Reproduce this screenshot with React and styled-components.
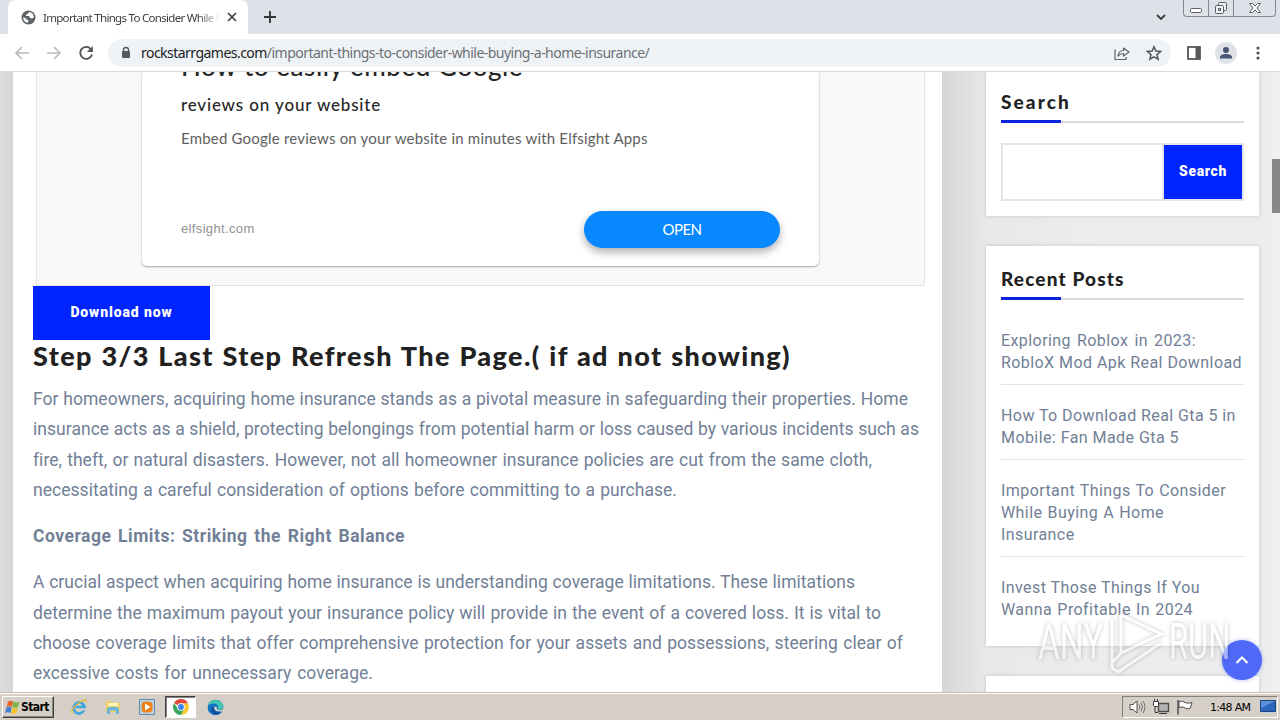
import React from 'react';
import styled, { createGlobalStyle } from 'styled-components';

const GlobalStyle = createGlobalStyle`
  * { box-sizing: border-box; }
  body { margin: 0; overflow: hidden; background: #ededed; }
`;

const Screen = styled.div`
  width: 1280px;
  height: 720px;
  display: flex;
  flex-direction: column;
  overflow: hidden;
  font-family: Roboto, 'Liberation Sans', sans-serif;
`;

const TabStrip = styled.div`
  position: relative;
  height: 34px;
  flex: none;
  display: flex;
  padding-left: 8px;
  background: #dee1e8;
`;

const Tab = styled.div`
  width: 240px;
  height: 34px;
  display: flex;
  align-items: center;
  padding: 0 10px 0 13px;
  background: #fff;
  border-radius: 7px 7px 0 0;
`;

const TabTitle = styled.div`
  width: 175px;
  margin: 0 8px 0 7px;
  overflow: hidden;
  white-space: nowrap;
  font: 11.5px 'Noto Sans', sans-serif;
  letter-spacing: -0.7px;
  color: #3c4043;
  mask-image: linear-gradient(90deg, #000 155px, transparent 177px);
`;

const NewTab = styled.div`
  display: flex;
  align-items: center;
  padding-left: 15px;
`;

const WindowControls = styled.div`
  position: absolute;
  right: 4px;
  top: 0;
  display: flex;
  height: 17px;
  border: 1px solid #85898f;
  border-top: 0;
  border-radius: 0 0 4px 4px;
`;

const Control = styled.div`
  width: ${(p) => p.$w}px;
  display: flex;
  justify-content: center;
  border-left: ${(p) => (p.$first ? 0 : 1)}px solid #85898f;
`;

const TabSearch = styled.div`
  margin-left: auto;
  margin-right: 114px;
  padding-top: 12px;
  line-height: 0;
`;

const Toolbar = styled.div`
  height: 38px;
  flex: none;
  display: flex;
  align-items: center;
  padding: 0 20px 0 13px;
  background: #fff;
  border-bottom: 1px solid #d8dadd;
`;

const Nav = styled.div`
  display: flex;
  gap: 14px;
  width: 95px;
`;

const AddressBar = styled.div`
  width: 1063px;
  flex: none;
  height: 28px;
  display: flex;
  align-items: center;
  padding: 0 9px 0 12px;
  border-radius: 14px;
  background: #f0f3f6;
`;

const Url = styled.div`
  flex: 1;
  margin-left: 9px;
  white-space: nowrap;
  font: 14px/18px 'Noto Sans', sans-serif;
  letter-spacing: -0.53px;
  color: #6b7075;

  b {
    font-weight: 400;
    color: #202124;
  }
`;

const AddressIcons = styled.div`
  display: flex;
  gap: 16px;
`;

const ToolbarIcons = styled.div`
  display: flex;
  align-items: center;
  flex: 1;
  justify-content: space-between;
  padding-left: 16px;
`;

const Profile = styled.div`
  width: 22px;
  height: 22px;
  margin-right: 6px;
  border-radius: 50%;
  background: #dfe3e8;
  display: flex;
  align-items: center;
  justify-content: center;
`;

const Viewport = styled.div`
  position: relative;
  height: 620px;
  flex: none;
  display: flex;
  overflow: hidden;
  background: linear-gradient(90deg, #dcdcdc 0, #d6d6d6 13px, #d6d6d6 942px, #e8e8e8 986px, #ededed 1100px);
`;

const Article = styled.main`
  width: 929px;
  height: 620px;
  flex: none;
  margin-left: 13px;
  padding: 0 17px 0 20px;
  background: #fff;
`;

const AdFrame = styled.div`
  height: 214px;
  margin-left: 3px;
  padding-left: 105px;
  background: #f8f8f8;
  border: 1px solid #e2e2e2;
  border-top: 0;
`;

const Ad = styled.div`
  width: 677px;
  height: 194px;
  padding: 0 39px;
  overflow: hidden;
  background: #fff;
  border-radius: 0 0 5px 5px;
  box-shadow: 0 1px 2px rgba(0, 0, 0, 0.35);
  color: #262626;
  white-space: nowrap;
`;

const AdTitle = styled.div`
  width: 342px;
  height: 28px;
  margin-top: -21px;
  font: 500 26px/30px Lato, sans-serif;
  letter-spacing: 0.5px;
  text-align-last: justify;
`;

const AdSubtitle = styled.div`
  width: 200px;
  margin-top: 14px;
  font: 500 17px/24px Lato, sans-serif;
  letter-spacing: 0.8px;
  text-align-last: justify;
`;

const AdText = styled.div`
  width: 466px;
  margin-top: 11px;
  font: 15px/21px Lato, sans-serif;
  letter-spacing: 0.2px;
  text-align-last: justify;
  color: #5e5e5e;
`;

const AdFooter = styled.div`
  display: flex;
  align-items: center;
  justify-content: space-between;
  margin-top: 62px;
  font: 13px/20px 'Liberation Sans', sans-serif;
  letter-spacing: 0.35px;
  color: #929292;
`;

const AdDomain = styled.span`
  padding-bottom: 2px;
`;

const OpenButton = styled.div`
  width: 196px;
  height: 37px;
  border-radius: 19px;
  background: #0788ff;
  box-shadow: 0 4px 9px rgba(0, 0, 0, 0.32);
  color: #fff;
  font: 15px/36px Lato, sans-serif;
  letter-spacing: -0.5px;
  text-align: center;
`;

const DownloadButton = styled.div`
  width: 177px;
  height: 54px;
  background: #0024ff;
  color: #fff;
  text-align: center;
  font: 900 14px/53px Roboto, sans-serif;
  letter-spacing: 0.9px;
`;

const Line = styled.span`
  display: block;
  width: ${(p) => p.$w}px;
  white-space: nowrap;
  text-align-last: justify;
`;

const Heading = styled.h2`
  margin: 0;
  height: 36px;
  font: 900 27px/32px Lato, sans-serif;
  letter-spacing: 1.4px;
  color: #212121;
`;

const Paragraph = styled.p`
  margin: 0 0 16px;
  padding-top: ${(p) => p.$top || 0}px;
  font: ${(p) => (p.$bold ? 700 : 400)} 17.5px/30.3px Roboto, sans-serif;
  letter-spacing: ${(p) => (p.$bold ? 0.5 : 0.04)}px;
  color: #718096;
`;

const Sidebar = styled.aside`
  width: 273px;
  margin-left: 44px;
  display: flex;
  flex-direction: column;
  gap: 30px;
`;

const Widget = styled.section`
  height: ${(p) => p.$h}px;
  flex: none;
  padding: ${(p) => p.$top}px 15px 0;
  background: #fff;
  box-shadow: 0 0 4px rgba(0, 0, 0, 0.16);
`;

const WidgetTitle = styled.h3`
  margin: 0;
  height: 34px;
  font: 900 19px/26px Lato, sans-serif;
  letter-spacing: ${(p) => p.$spacing}px;
  color: #212121;
  border-bottom: 2px solid #d9d9d9;
  position: relative;
  white-space: nowrap;

  &::after {
    content: '';
    position: absolute;
    left: 0;
    bottom: -2px;
    width: 60px;
    height: 3px;
    background: #0c25dc;
  }
`;

const SearchForm = styled.div`
  display: flex;
  height: 58px;
  margin-top: 20px;
  border: 2px solid #e3e5ea;
`;

const SearchInput = styled.div`
  flex: 1;
  border-right: 2px solid #e3e5ea;
`;

const SearchButton = styled.div`
  width: 78px;
  background: #0024ff;
  color: #fff;
  text-align: center;
  font: 900 14px/52px Roboto, sans-serif;
  letter-spacing: 0.6px;
`;

const Post = styled.div`
  padding: ${(p) => p.$top || 20}px 0 10px;
  border-bottom: ${(p) => (p.$last ? 0 : 1)}px solid #e2e2e2;
  font: 16px/22px Roboto, sans-serif;
  letter-spacing: 0.42px;
  color: #718096;
`;

const ScrollThumb = styled.div`
  position: absolute;
  right: 0;
  top: 87px;
  width: 8px;
  height: 54px;
  background: #878787;
`;

const ScrollTrack = styled.div`
  position: absolute;
  right: 0;
  top: 0;
  width: 8px;
  height: 620px;
  background: #f0f0f0;
`;

const ToTop = styled.div`
  position: absolute;
  left: 1222px;
  top: 568px;
  width: 40px;
  height: 40px;
  border-radius: 50%;
  background: #5069f8;
  box-shadow: 0 0 4px rgba(60, 80, 220, 0.4);
  display: flex;
  align-items: center;
  justify-content: center;
`;

const Watermark = styled.div`
  position: absolute;
  left: 1038px;
  top: 536px;
  width: 200px;
  height: 68px;
  display: flex;
  align-items: center;
  filter: drop-shadow(0 0 2px rgba(0, 0, 0, 0.5));
  opacity: 0.5;
`;

const MarkText = styled.span`
  flex: none;
  width: ${(p) => p.$w}px;
  font: 400 50px/68px Roboto, sans-serif;
  color: #fff;

  span {
    display: inline-block;
    transform: scaleX(${(p) => p.$scale});
    transform-origin: left;
  }
`;

const Taskbar = styled.div`
  height: 28px;
  flex: none;
  display: flex;
  align-items: center;
  padding: 1px 2px 0;
  background: #d5cfc7;
  border-top: 1px solid #c4c0b8;
  box-shadow: inset 0 1px #fff;
`;

const Start = styled.div`
  width: 52px;
  height: 22px;
  display: flex;
  align-items: center;
  gap: 1px;
  padding-left: 2px;
  border: 1px solid;
  border-color: #fff #404040 #404040 #fff;
  box-shadow: inset -1px -1px #8a867e;
  font: 700 12px 'DejaVu Sans Condensed', 'DejaVu Sans', sans-serif;
  letter-spacing: -0.6px;
  color: #000;
`;

const TaskItem = styled.div`
  width: ${(p) => (p.$active ? 31 : 20)}px;
  height: 22px;
  margin-left: ${(p) => p.$gap}px;
  display: flex;
  align-items: center;
  justify-content: center;
  ${(p) => p.$active && 'background: #fff; border: 1px solid; border-color: #404040 #fff #fff #404040; box-shadow: inset 1px 1px #85817a;'}
`;

const Tray = styled.div`
  margin-left: auto;
  width: 156px;
  height: 22px;
  display: flex;
  align-items: center;
  padding-left: 5px;
  border: 1px solid;
  border-color: #85817a #fff #fff #85817a;
`;

const Clock = styled.div`
  margin: 0 9px 0 16px;
  width: 41px;
  white-space: nowrap;
  font: 11px 'DejaVu Sans', sans-serif;
  letter-spacing: -0.7px;
  color: #000;
`;

const GlobeIcon = () => (
  <svg width="15" height="15" viewBox="0 0 15 15">
    <circle cx="7.5" cy="7.5" r="7" fill="#5f6368" />
    <path d="M2 7.5 4.5 8l1.2 1.7 1.7.3-.3 2.8C4.4 12.7 2.3 10.7 2 7.5ZM8 2c-.2 1-1 1.2-1 2l-2 .5V6h3l1.3 2.3H12l.9-1.3C12.7 4.3 10.6 2.2 8 2Z" fill="#fff" />
  </svg>
);

const ArrowIcon = ({ flip }) => (
  <svg width="18" height="18" viewBox="0 0 18 18" fill="none" stroke="#b9bbbe" strokeWidth="1.7">
    <path d={flip ? 'M2 9h13M9 3l6 6-6 6' : 'M16 9H3M9 3 3 9l6 6'} />
  </svg>
);

const ReloadIcon = () => (
  <svg width="18" height="18" viewBox="0 0 18 18" fill="none" stroke="#505357" strokeWidth="1.9">
    <path d="M13.8 5A6 6 0 1 0 15 10.5" />
    <path d="M15.9 2v6h-6z" fill="#505357" stroke="none" />
  </svg>
);

const LockIcon = () => (
  <svg width="12" height="14" viewBox="0 0 12 14">
    <path d="M3.5 6V4a2.5 2.5 0 0 1 5 0v2" fill="none" stroke="#55595d" strokeWidth="1.4" />
    <rect x="2" y="5" width="8" height="7" rx="1" fill="#55595d" />
  </svg>
);

const ShareIcon = () => (
  <svg width="16" height="16" viewBox="0 0 16 16" fill="none" stroke="#5f6368" strokeWidth="1.2">
    <path d="M2 5H1v9.5h11V12" />
    <path d="M4 11c.4-3.5 2.2-5.5 5.5-5.5V3L15 7l-5.500 4V8.500C7 8.500 5.500 9.200 4 11Z" strokeLinejoin="round" />
  </svg>
);

const StarIcon = () => (
  <svg width="16" height="16" viewBox="0 0 16 16">
    <path d="m8 1.8 1.9 4.3 4.7.4-3.6 3.1 1.1 4.6L8 11.8l-4.1 2.4L5 9.6 1.4 6.5l4.7-.4Z" fill="none" stroke="#505357" strokeWidth="1.5" />
  </svg>
);

const PanelIcon = () => (
  <svg width="14" height="14" viewBox="0 0 14 14">
    <rect x="1" y="1" width="12" height="12" fill="#fff" stroke="#55575b" strokeWidth="1.8" />
    <path d="M8.500 1H13v12H8.500z" fill="#55575b" />
  </svg>
);

const PersonIcon = () => (
  <svg width="14" height="14" viewBox="0 0 14 14" fill="#4a5675">
    <circle cx="7" cy="4" r="3" />
    <path d="M1 12.500V11c0-2 3-3 6-3s6 1 6 3v1.500Z" />
  </svg>
);

const DotsIcon = () => (
  <svg width="4" height="16" viewBox="0 0 4 16" fill="#505357">
    <circle cx="2" cy="3" r="1.6" />
    <circle cx="2" cy="8" r="1.6" />
    <circle cx="2" cy="13" r="1.6" />
  </svg>
);

const FlagLogo = () => (
  <svg width="15" height="15" viewBox="0 0 15 15">
    <path d="M3 1.500c2-1 3.500-1 5.300 0L7 7c-2-1-3.500-1-5.400 0Z" fill="#e8642c" />
    <path d="M8.600 1.800c2 1 3.800 1 5.700 0L13 7.300c-2 1-3.500 1-5.600 0Z" fill="#7ab648" />
    <path d="M1.400 7.500c2-1 3.500-1 5.300 0l-1.300 5.400c-2-1-3.200-1-5.200 0Z" fill="#3f80cf" />
    <path d="M7.200 7.800c2 1 3.500 1 5.600 0l-1.400 5.400c-2 1-3.500 1-5.500 0Z" fill="#f6c431" />
  </svg>
);

const IeIcon = () => (
  <svg width="18" height="18" viewBox="0 0 18 18" fill="none">
    <path d="M14 12.5A5.5 5.5 0 1 1 14.5 9H5" stroke="#3fa6df" strokeWidth="2.7" />
    <path d="M3 15.5C-.5 15 3.500 9 8 5.500S17 0 16.300 4.500" stroke="#e9b93c" strokeWidth="1.3" />
  </svg>
);

const FolderIcon = () => (
  <svg width="18" height="18" viewBox="0 0 18 18">
    <path d="M2 3h5l1 1.500h8V14H2z" fill="#edcf69" />
    <path d="M4 5h10v3H4z" fill="#fff3b8" />
    <path d="M3 16v-4q0-3 3-3h6q3 0 3 3v4h-3v-3.500H6V16z" fill="#69b6dc" />
  </svg>
);

const MediaIcon = () => (
  <svg width="16" height="16" viewBox="0 0 16 16">
    <path d="M.5.5h15v15H.5z" fill="#b7d5ea" stroke="#6689a8" />
    <rect x="2.5" y="2.5" width="11" height="11" rx="3.5" fill="#f08218" />
    <path d="m6 4.500 5.500 3.500L6 11.500z" fill="#fff" />
  </svg>
);

const ChromeIcon = () => (
  <svg width="16" height="16" viewBox="0 0 18 18">
    <path d="M9 9 1.200 4.500A9 9 0 0 1 16.800 4.500L17 5H9Z" fill="#df4a3c" />
    <path d="M9 5h8a9 9 0 0 1-8 13l3.500-7Z" fill="#f7ca34" />
    <path d="M1.200 4.500A9 9 0 0 0 9 18l3.500-7L9 13l-3.500-2Z" fill="#3aa556" />
    <circle cx="9" cy="9" r="4.3" fill="#fff" />
    <circle cx="9" cy="9" r="3.3" fill="#4183ed" />
  </svg>
);

const EdgeIcon = () => (
  <svg width="17" height="17" viewBox="0 0 18 18">
    <circle cx="9" cy="9" r="8.3" fill="#1274c5" />
    <path d="M1 7C2-1 16-1 17.300 8c.2 3-3 4-6 3 2-4-2-7-5.500-6C3 5.500 1.500 6 1 7Z" fill="#41c5b0" />
    <path d="M7.500 8.500c-1.500 3 2 7 7 5.500-4 4-10 2-10-2.500 0-2 1.500-3 3-3Z" fill="#124b91" />
    <path d="M8 8.500c1-1.500 3 0 2.500 2.300 2 1.300 5 1 6.500-.3l1 3-6-.5c-3 0-5-2-4-4.500Z" fill="#d5cfc7" />
  </svg>
);

const TrayIcons = () => (
  <svg width="66" height="18" viewBox="0 0 66 18" fill="none" stroke="#4e4e4e">
    <path d="M2 6.500h3L9 3v12l-4-3.500H2z" fill="#fff" />
    <path d="M11 6.500q1.500 2.500 0 5M13 4.500q3 4.500 0 9M15 3q4 6 0 12" stroke="#77736d" />
    <path d="M30.500 5.500h10v8h-10z" fill="#b4b4b4" strokeWidth="1.4" />
    <path d="M31 15.500h8M27 9v5.500h3" stroke="#383838" />
    <path d="M25.500 3.500h5v4l-1 1h-3l-1-1zM26.500 1v3M29.500 1v3" fill="#fff" stroke="#383838" />
    <path d="M50 2v14.500" strokeWidth="1.5" />
    <path d="M51 3.500q4-1 6 1 3 1.500 7 0l-2 6q-3 1-5-.5-2-2-6-.5Z" fill="#fff" />
  </svg>
);

const DesktopIcon = () => (
  <svg width="16" height="14" viewBox="0 0 16 14">
    <path d="M.5.5h15v11H.5z" fill="#2c66bd" stroke="#1c447f" />
    <path d="M1 1h14L1 8z" fill="#5a92dc" />
    <path d="M3 12.500h10" stroke="#b9d0ee" />
  </svg>
);

const intro = [
  [875, 'For homeowners, acquiring home insurance stands as a pivotal measure in safeguarding their properties. Home'],
  [886, 'insurance acts as a shield, protecting belongings from potential harm or loss caused by various incidents such as'],
  [839, 'fire, theft, or natural disasters. However, not all homeowner insurance policies are cut from the same cloth,'],
  [644, 'necessitating a careful consideration of options before committing to a purchase.'],
];

const coverage = [
  [822, 'A crucial aspect when acquiring home insurance is understanding coverage limitations. These limitations'],
  [848, 'determine the maximum payout your insurance policy will provide in the event of a covered loss. It is vital to'],
  [870, 'choose coverage limits that offer comprehensive protection for your assets and possessions, steering clear of'],
  [340, 'excessive costs for unnecessary coverage.'],
];

const posts = [
  [[195, 'Exploring Roblox in 2023:'], [241, 'RobloX Mod Apk Real Download']],
  [[234, 'How To Download Real Gta 5 in'], [178, 'Mobile: Fan Made Gta 5']],
  [[225, 'Important Things To Consider'], [163, 'While Buying A Home'], [77, 'Insurance']],
  [[199, 'Invest Those Things If You'], [192, 'Wanna Profitable In 2024']],
];

const lines = (rows) => rows.map(([w, text]) => <Line key={text} $w={w}>{text}</Line>);

const Browser = () => (
  <>
    <TabStrip>
      <Tab>
        <GlobeIcon />
        <TabTitle>Important Things To Consider While B</TabTitle>
        <svg width="12" height="12" viewBox="0 0 12 12" stroke="#3c4043" strokeWidth="1.7">
          <path d="m2 2 8 8M10 2l-8 8" />
        </svg>
      </Tab>
      <NewTab>
        <svg width="14" height="14" viewBox="0 0 14 14" stroke="#33373b" strokeWidth="1.9">
          <path d="M7 1v12M1 7h12" />
        </svg>
      </NewTab>
      <TabSearch>
        <svg width="10" height="10" viewBox="0 0 10 10" fill="none" stroke="#3c4043" strokeWidth="1.9">
          <path d="m1 3 4 4 4-4" />
        </svg>
      </TabSearch>
      <WindowControls>
        <Control $w={24} $first>
          <svg width="14" height="16" fill="#fff" stroke="#5c6066"><rect x="1.5" y="8.5" width="11" height="4" rx="1" /></svg>
        </Control>
        <Control $w={25}>
          <svg width="14" height="16" fill="#eef0f3" stroke="#5c6066">
            <rect x="4.5" y="2.5" width="8" height="8" rx="1" />
            <rect x="1.5" y="5.5" width="8" height="8" rx="1" />
            <rect x="4.5" y="8.5" width="2" height="2" />
          </svg>
        </Control>
        <Control $w={42}>
          <svg width="14" height="16" viewBox="0 0 14 16" fill="#fff" stroke="#5c6066">
            <path d="M1.5 3.5h3L7 6l2.500-2.500h3L9 8l3.500 4.500h-3L7 10l-2.500 2.500h-3L5 8Z" />
          </svg>
        </Control>
      </WindowControls>
    </TabStrip>
    <Toolbar>
      <Nav>
        <ArrowIcon />
        <ArrowIcon flip />
        <ReloadIcon />
      </Nav>
      <AddressBar>
        <LockIcon />
        <Url><b>rockstarrgames.com</b>/important-things-to-consider-while-buying-a-home-insurance/</Url>
        <AddressIcons>
          <ShareIcon />
          <StarIcon />
        </AddressIcons>
      </AddressBar>
      <ToolbarIcons>
        <PanelIcon />
        <Profile><PersonIcon /></Profile>
        <DotsIcon />
      </ToolbarIcons>
    </Toolbar>
  </>
);

const Page = () => (
  <Viewport>
    <Article>
      <AdFrame>
        <Ad>
          <AdTitle>How to easily embed Google</AdTitle>
          <AdSubtitle>reviews on your website</AdSubtitle>
          <AdText>Embed Google reviews on your website in minutes with Elfsight Apps</AdText>
          <AdFooter>
            <AdDomain>elfsight.com</AdDomain>
            <OpenButton>OPEN</OpenButton>
          </AdFooter>
        </Ad>
      </AdFrame>
      <DownloadButton>Download now</DownloadButton>
      <Heading><Line $w={758}>Step 3/3 Last Step Refresh The Page.( if ad not showing)</Line></Heading>
      <Paragraph $top={8}>{lines(intro)}</Paragraph>
      <Paragraph $bold>{lines([[372, 'Coverage Limits: Striking the Right Balance']])}</Paragraph>
      <Paragraph>{lines(coverage)}</Paragraph>
    </Article>
    <Sidebar>
      <Widget $h={144} $top={17}>
        <WidgetTitle $spacing={2.1}>Search</WidgetTitle>
        <SearchForm>
          <SearchInput />
          <SearchButton>Search</SearchButton>
        </SearchForm>
      </Widget>
      <Widget $h={400} $top={20}>
        <WidgetTitle $spacing={1.15}>Recent Posts</WidgetTitle>
        {posts.map((post, i) => (
          <Post key={i} $top={i === 0 ? 30 : 20} $last={i === posts.length - 1}>{lines(post)}</Post>
        ))}
      </Widget>
      <Widget $h={100} $top={20} />
    </Sidebar>
    <ScrollTrack />
    <ScrollThumb />
    <ToTop>
      <svg width="14" height="10" viewBox="0 0 14 10" fill="none" stroke="#fff" strokeWidth="2">
        <path d="m1.500 8 5.500-5.500L12.500 8" />
      </svg>
    </ToTop>
    <Watermark>
      <MarkText $w={69} $scale={0.67}><span>ANY</span></MarkText>
      <svg width="62" height="68" viewBox="0 0 62 68" fill="none" stroke="#fff" strokeWidth="3">
        <path d="M14 7v38l40-19ZM14 7l40 19M5 12v48l6 4 43-29M14 45 5 55" />
      </svg>
      <MarkText $w={67} $scale={0.62}><span>RUN</span></MarkText>
    </Watermark>
  </Viewport>
);

const App = () => (
  <>
    <GlobalStyle />
    <Screen>
      <Browser />
      <Page />
      <Taskbar>
        <Start><FlagLogo />Start</Start>
        <TaskItem $gap={15}><IeIcon /></TaskItem>
        <TaskItem $gap={14}><FolderIcon /></TaskItem>
        <TaskItem $gap={14}><MediaIcon /></TaskItem>
        <TaskItem $gap={8} $active><ChromeIcon /></TaskItem>
        <TaskItem $gap={9}><EdgeIcon /></TaskItem>
        <Tray>
          <TrayIcons />
          <Clock>1:48 AM</Clock>
          <DesktopIcon />
        </Tray>
      </Taskbar>
    </Screen>
  </>
);

export default App;
